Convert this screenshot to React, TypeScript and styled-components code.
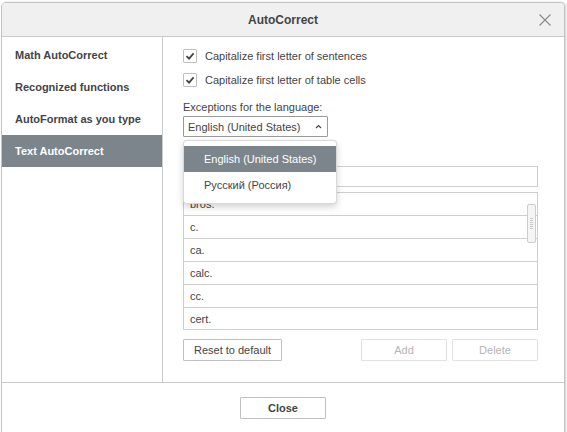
import React, { FC } from 'react';
import styled, { createGlobalStyle } from 'styled-components';

const GlobalStyle = createGlobalStyle`
  html, body {
    margin: 0;
    padding: 0;
    background: #ffffff;
    overflow: hidden;
  }
  body {
    font-family: 'Liberation Sans', Arial, sans-serif;
    color: #444444;
  }
`;

const Page = styled.div`
  padding: 2px 0 0 1px;
  width: 567px;
  height: 432px;
  box-sizing: border-box;
  overflow: hidden;
`;

const Dialog = styled.div`
  width: 564px;
  box-sizing: border-box;
  border: 1px solid #c4c4c4;
  border-radius: 5px 5px 0 0;
  background: #ffffff;
  box-shadow: 1px 0 2px rgba(0, 0, 0, 0.2);
`;

const Header = styled.div`
  display: grid;
  grid-template-columns: 1fr auto 1fr;
  align-items: center;
  height: 33px;
  background: #f0f0f0;
  border-bottom: 1px solid #cbcbcb;
  border-radius: 4px 4px 0 0;
`;

const Title = styled.div`
  grid-column: 2;
  font-size: 12px;
  font-weight: bold;
  color: #444;
`;

const CloseIcon = styled.div`
  justify-self: end;
  margin-right: 13px;
  width: 12px;
  height: 12px;
  display: flex;
`;

const Body = styled.div`
  display: flex;
  height: 345px;
`;

const Sidebar = styled.div`
  width: 160px;
  border-right: 1px solid #cbcbcb;
  padding-top: 2px;
  display: flex;
  flex-direction: column;
`;

const SideItem = styled.div<{ active?: boolean }>`
  height: 32px;
  display: flex;
  align-items: center;
  padding-left: 13px;
  font-size: 11px;
  font-weight: bold;
  color: ${(p) => (p.active ? '#ffffff' : '#444444')};
  background: ${(p) => (p.active ? '#7d858c' : 'transparent')};
`;

const Panel = styled.div`
  flex: 1;
  padding: 12px 0 0 20px;
  display: flex;
  flex-direction: column;
`;

const Content = styled.div`
  width: 355px;
  display: flex;
  flex-direction: column;
`;

const CheckRow = styled.label`
  display: flex;
  align-items: center;
  height: 14px;
  gap: 8px;
  font-size: 11px;
  margin-bottom: 10px;
`;

const Box = styled.span`
  width: 14px;
  height: 14px;
  box-sizing: border-box;
  border: 1px solid #c0c0c0;
  border-radius: 1px;
  display: flex;
  align-items: center;
  justify-content: center;
  background: #fff;
`;

const FieldLabel = styled.div`
  font-size: 11px;
  line-height: 13px;
  margin-top: 4px;
`;

const SelectWrap = styled.div`
  position: relative;
  margin-top: 2px;
  width: 145px;
`;

const Select = styled.div`
  height: 21px;
  box-sizing: border-box;
  border: 1px solid #9a9a9a;
  border-radius: 1px;
  display: flex;
  align-items: center;
  justify-content: space-between;
  padding: 0 5px 0 4px;
  font-size: 11px;
`;

const Menu = styled.div`
  position: absolute;
  top: 24px;
  left: 0;
  width: 154px;
  box-sizing: border-box;
  padding: 5px 0;
  background: #fff;
  border: 1px solid rgba(0, 0, 0, 0.15);
  border-radius: 4px;
  box-shadow: 0 3px 7px rgba(0, 0, 0, 0.18);
  z-index: 5;
`;

const MenuItem = styled.div<{ selected?: boolean }>`
  height: 26px;
  display: flex;
  align-items: center;
  padding-left: 20px;
  font-size: 11px;
  color: ${(p) => (p.selected ? '#ffffff' : '#444444')};
  background: ${(p) => (p.selected ? '#7d858c' : 'transparent')};
`;

const Input = styled.div`
  margin-top: 29px;
  height: 21px;
  box-sizing: border-box;
  border: 1px solid #cfcfcf;
`;

const List = styled.div`
  position: relative;
  margin-top: 5px;
  height: 138px;
  box-sizing: border-box;
  border: 1px solid #cfcfcf;
  overflow: hidden;
`;

const ListRow = styled.div`
  height: 23px;
  box-sizing: border-box;
  border-bottom: 1px solid #cfcfcf;
  padding-left: 6px;
  display: flex;
  align-items: center;
  font-size: 11px;
  &:last-child {
    border-bottom: none;
  }
`;

const Scroll = styled.div`
  position: absolute;
  right: 1px;
  top: 11px;
  width: 9px;
  height: 39px;
  box-sizing: border-box;
  border: 1px solid #cdcdcd;
  border-radius: 2px;
  background: #f5f5f5;
  display: flex;
  flex-direction: column;
  align-items: center;
  justify-content: center;
  gap: 1px;
`;

const Grip = styled.span`
  width: 3px;
  height: 1px;
  background: #c8c8c8;
`;

const Buttons = styled.div`
  margin-top: 9px;
  display: flex;
  align-items: center;
`;

const Button = styled.button<{ w: number; disabled?: boolean }>`
  width: ${(p) => p.w}px;
  height: 22px;
  box-sizing: border-box;
  padding: 0;
  background: #fff;
  border: 1px solid ${(p) => (p.disabled ? '#e2e2e2' : '#c0c0c0')};
  border-radius: 1px;
  font-family: 'Liberation Sans', Arial, sans-serif;
  font-size: 11px;
  color: ${(p) => (p.disabled ? '#b5b5b5' : '#444444')};
`;

const Spacer = styled.div`
  flex: 1;
`;

const Footer = styled.div`
  border-top: 1px solid #cbcbcb;
  padding: 14px 0 16px;
  display: flex;
  justify-content: center;
`;

const CloseButton = styled(Button)`
  font-weight: bold;
`;

const sideItems = [
  'Math AutoCorrect',
  'Recognized functions',
  'AutoFormat as you type',
  'Text AutoCorrect',
];

const rows = ['bros.', 'c.', 'ca.', 'calc.', 'cc.', 'cert.'];

const Check: FC = () => (
  <Box>
    <svg width="10" height="10" viewBox="0 0 10 10">
      <path d="M1.5 5.2 L4 7.6 L8.6 2.4" fill="none" stroke="#444" strokeWidth="1.8" />
    </svg>
  </Box>
);

const App: FC = () => {
  return (
    <Page>
      <GlobalStyle />
      <Dialog>
        <Header>
          <Title>AutoCorrect</Title>
          <CloseIcon>
            <svg width="12" height="12" viewBox="0 0 12 12">
              <path d="M0.5 0.5 L11.5 11.5 M11.5 0.5 L0.5 11.5" stroke="#8a8a8a" strokeWidth="1.1" />
            </svg>
          </CloseIcon>
        </Header>
        <Body>
          <Sidebar>
            {sideItems.map((s, i) => (
              <SideItem key={s} active={i === 3}>
                {s}
              </SideItem>
            ))}
          </Sidebar>
          <Panel>
            <Content>
              <CheckRow>
                <Check />
                Capitalize first letter of sentences
              </CheckRow>
              <CheckRow>
                <Check />
                Capitalize first letter of table cells
              </CheckRow>
              <FieldLabel>Exceptions for the language:</FieldLabel>
              <SelectWrap>
                <Select>
                  <span>English (United States)</span>
                  <svg width="7" height="5" viewBox="0 0 7 5">
                    <path d="M1 4 L3.5 1.5 L6 4" fill="none" stroke="#444" strokeWidth="1.2" />
                  </svg>
                </Select>
                <Menu>
                  <MenuItem selected>English (United States)</MenuItem>
                  <MenuItem>Русский (Россия)</MenuItem>
                </Menu>
              </SelectWrap>
              <Input />
              <List>
                {rows.map((r) => (
                  <ListRow key={r}>{r}</ListRow>
                ))}
                <Scroll>
                  {[0, 1, 2, 3, 4, 5].map((g) => (
                    <Grip key={g} />
                  ))}
                </Scroll>
              </List>
              <Buttons>
                <Button w={99}>Reset to default</Button>
                <Spacer />
                <Button w={86} disabled>
                  Add
                </Button>
                <Button w={86} disabled style={{ marginLeft: 5 }}>
                  Delete
                </Button>
              </Buttons>
            </Content>
          </Panel>
        </Body>
        <Footer>
          <CloseButton w={86}>Close</CloseButton>
        </Footer>
      </Dialog>
    </Page>
  );
};

export default App;
